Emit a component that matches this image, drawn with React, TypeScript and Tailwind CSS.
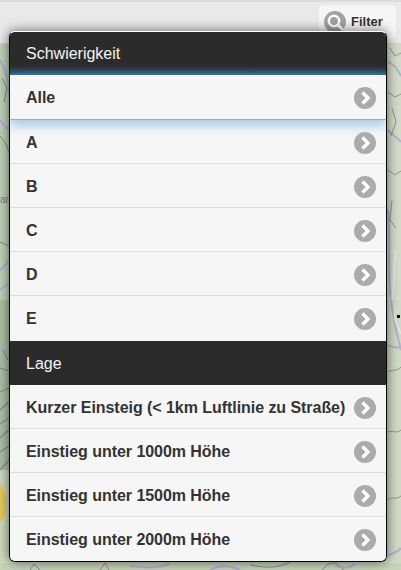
const difficulties = ["A", "B", "C", "D"];
const locations = [
  "Kurzer Einsteig (< 1km Luftlinie zu Straße)",
  "Einstieg unter 1000m Höhe",
  "Einstieg unter 1500m Höhe",
];

function MapBackground() {
  return (
    <svg className="absolute inset-0" width="401" height="570" viewBox="0 0 401 570">
      <rect width="401" height="570" fill="#cfd9c1" />
      <path d="M0 44H9V300H0Z" fill="#bfd0b8" />
      <path d="M0 300H9V470H0Z" fill="#aebfa5" />
      <path d="M388 44H401V300H388Z" fill="#d3dcc8" />
      <path d="M388 300H401V570H388Z" fill="#d0dac5" />
      <path d="M0 563H401V570H0Z" fill="#c6d4b9" />
      <path d="M0 484c7 6 9 26 2 36l-2 2Z" fill="#e2cb5c" />
      <path d="M0 60c6 10 9 24 9 34M0 120c4 6 7 8 9 10M0 270c4-2 7-8 9-10M0 290c3-3 7-6 9-6M0 349c4 1 7 1 9 0" fill="none" stroke="#aeb0d6" strokeWidth="2" />
      <path d="M388 62c6 2 10 8 13 14M388 130c5 6 10 8 13 12M388 210c3 24 0 50 2 80 3 30 6 40 11 60M388 345c5 3 9 3 13 2M388 556c4-4 9-2 13-8" fill="none" stroke="#b5afd0" strokeWidth="2" />
      <path d="M392 300c3-22 1-30 4-50M395 310c-2 12 3 16 6 24" fill="none" stroke="#e6e8e0" strokeWidth="1.5" />
      <path d="M390 48l5 8 6-3M388 92l7 5 6-3M392 108l4 14-5 14M388 170l7 5 6-4M392 200l-2 20 6 8M388 372c4-3 8 0 13-5M388 432c4-2 8 2 13-2M388 500c5-4 8 0 13-4" fill="none" stroke="#75776f" strokeWidth="0.7" />
      <path d="M2 78l5 10-3 14M0 136l6 8 3 8M0 242l9 4M3 350l5 10M0 368l9 3M0 392l9-4" fill="none" stroke="#6f716b" strokeWidth="0.7" />
      <path d="M0 410l9-8M0 424l9-6M0 438l9-8M0 452l9-6M0 470l9-10" fill="none" stroke="#8a8f86" strokeWidth="1.4" />
      <path d="M30 570l4-6 6 6M100 570l5-7 4 7M250 565c20 4 30 2 40-3M322 570l6-6 8-1 8 7" fill="none" stroke="#6f716b" strokeWidth="0.7" />
      <path d="M130 566c20 2 30 2 40-2M210 570c10-6 22-4 30 0M335 566c8 2 16 2 20-2" fill="none" stroke="#b5afd0" strokeWidth="2" />
      <rect x="397" y="315" width="3" height="3" fill="#111111" />
      <text x="0" y="203" fontSize="10" fill="#7d7d7d" fontFamily="Liberation Sans, sans-serif">ar</text>
    </svg>
  );
}

function ArrowIcon() {
  return (
    <span className="flex h-[22px] w-[22px] shrink-0 items-center justify-center rounded-full bg-[#ababab]">
      <svg width="22" height="22" viewBox="0 0 22 22" fill="none" stroke="#ffffff">
        <path d="M8.5 5.5L14 11L8.5 16.5" strokeWidth="3.4" />
      </svg>
    </span>
  );
}

function Divider({ label, className }: { label: string; className: string }) {
  return (
    <div className={`flex items-center pl-4 text-base text-[#f4f4f4] ${className}`}>
      {label}
    </div>
  );
}

function Row({ label, className = "h-11 border-b pt-0.5" }: { label: string; className?: string }) {
  return (
    <div
      className={`flex items-center justify-between border-[#dddddd] bg-[#f6f6f6] pl-4 pr-[10px] text-base font-bold tracking-[-0.05px] text-[#333333] ${className}`}
    >
      <span>{label}</span>
      <ArrowIcon />
    </div>
  );
}

export default function App() {
  return (
    <div className="relative h-[570px] w-[401px] overflow-hidden font-['Liberation_Sans',sans-serif]">
      <MapBackground />

      <header className="relative flex h-[43px] justify-end border-t-2 border-[#dcdcdc] bg-[#e9e9e9] pr-[5px] pt-[3px]">
        <button className="flex h-[34px] w-[77px] items-center gap-[5px] rounded-[5px] bg-[#f6f6f6] pl-[5px] text-[13px] font-bold text-[#333333]">
          <span className="flex h-[22px] w-[22px] items-center justify-center rounded-full bg-[#a3a3a3]">
            <svg width="22" height="22" viewBox="0 0 22 22" fill="none" stroke="#ffffff">
              <circle cx="10" cy="10" r="5.2" strokeWidth="2.4" />
              <path d="M14 14L18 18" strokeWidth="3" strokeLinecap="round" />
            </svg>
          </span>
          Filter
        </button>
      </header>

      <div className="absolute left-[9px] top-[31px] w-[378px] overflow-hidden rounded-[6px] border border-black border-t-white shadow-[0_0_12px_rgba(0,0,0,0.6)]">
        <Divider label="Schwierigkeit" className="h-[43px] bg-[linear-gradient(#2b2b2b_75%,#2a2c2f_80%,#2f6593)]" />
        <Row
          label="Alle"
          className="relative z-10 h-[45px] border-t border-b border-t-white border-b-[#8eb4d4] shadow-[0_6px_10px_#a9cbe8]"
        />
        {difficulties.map((item) => (
          <Row key={item} label={item} />
        ))}
        <Row label="E" className="h-[45px] pt-px" />
        <Divider label="Lage" className="h-11 bg-[#2b2b2b] pt-0.5" />
        {locations.map((item) => (
          <Row key={item} label={item} />
        ))}
        <Row label="Einstieg unter 2000m Höhe" className="h-11 pt-0.5" />
      </div>
    </div>
  );
}
